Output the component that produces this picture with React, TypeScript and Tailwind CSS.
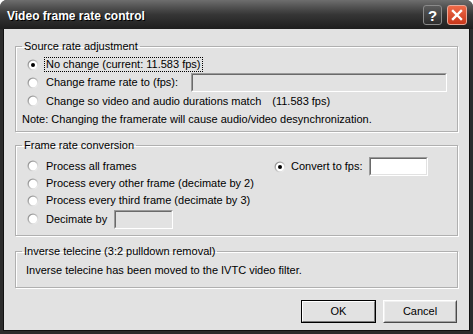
import React from 'react';

function Radio({ checked = false }: { checked?: boolean }) {
  return (
    <svg width="12" height="12" viewBox="0 0 12 12" className="shrink-0">
      <defs>
        <linearGradient id="rg" x1="0" y1="0" x2="1" y2="1">
          <stop offset="0" stopColor="#7a7a7a" />
          <stop offset="0.55" stopColor="#c8c8c8" />
          <stop offset="1" stopColor="#ffffff" />
        </linearGradient>
      </defs>
      <circle cx="6" cy="6" r="5.5" fill="url(#rg)" />
      <circle cx="6" cy="6" r="4.2" fill="#ffffff" />
      {checked && <circle cx="6" cy="6" r="2" fill="#000000" />}
    </svg>
  );
}

function Sunken({ className = '', white = false }: { className?: string; white?: boolean }) {
  return (
    <div
      className={`border border-t-[#9a9a9a] border-l-[#9a9a9a] border-b-white border-r-white ${
        white ? 'bg-white' : 'bg-[#e2e2e2]'
      } ${className}`}
    >
      <div className="h-full w-full border border-t-[#6a6a6a] border-l-[#6a6a6a] border-b-[#e2e2e2] border-r-[#e2e2e2]" />
    </div>
  );
}

function Group({ title, className = '', children }: { title: string; className?: string; children: React.ReactNode }) {
  return (
    <fieldset className={`mx-[11px] border border-[#b0b0b0] shadow-[inset_1px_1px_0_#ffffff,1px_1px_0_#ffffff] ${className}`}>
      <legend className="ml-[6px] px-[2px] leading-[13px]">{title}</legend>
      {children}
    </fieldset>
  );
}

export default function App() {
  return (
    <div className="w-[473px] h-[334px] flex flex-col bg-[#2c2c2c] rounded-t-[7px] font-['Liberation_Sans',Arial,sans-serif] text-[11px] text-black whitespace-nowrap">
      {/* title bar */}
      <div className="h-[29px] shrink-0 flex items-center pl-[7px] pr-[6px] rounded-t-[7px] bg-gradient-to-b from-[#6e6e6e] via-[#363636] to-[#1e1e1e]">
        <span className="text-white font-bold text-[12px] pt-[2px] [text-shadow:1px_1px_0_#000]">Video frame rate control</span>
        <div className="ml-auto flex items-center gap-[5px] pt-[1px]">
          <div className="w-[19px] h-[20px] rounded-[3px] border border-[#8a8a8a] bg-gradient-to-b from-[#5c5c5c] to-[#2e2e2e] flex items-center justify-center text-white font-bold text-[15px] leading-none">
            ?
          </div>
          <div className="w-[20px] h-[20px] rounded-[3px] border border-[#e8a898] bg-gradient-to-b from-[#ee6a48] to-[#c8361a] flex items-center justify-center">
            <svg width="12" height="12" viewBox="0 0 12 12">
              <path d="M2 2 L10 10 M10 2 L2 10" stroke="#ffffff" strokeWidth="2.4" strokeLinecap="square" />
            </svg>
          </div>
        </div>
      </div>

      {/* body */}
      <div className="flex-1 mx-[3px] mb-[3px] bg-[#e2e2e2] border-l border-r border-b border-[#111] flex flex-col pt-[11px]">
        <Group title="Source rate adjustment">
          <div className="flex flex-col pl-[11px] pr-[10px] pt-[3px] pb-[2px]">
            <div className="h-[17px] flex items-center gap-[5px]">
              <Radio checked />
              <span className="border border-dotted border-black px-[1px] leading-[13px]">No change (current: 11.583 fps)</span>
            </div>
            <div className="h-[19px] flex items-center gap-[5px]">
              <Radio />
              <span className="pl-[2px]">Change frame rate to (fps):</span>
              <Sunken className="ml-[8px] flex-1 h-[19px]" />
            </div>
            <div className="h-[18px] flex items-center gap-[5px]">
              <Radio />
              <span className="pl-[2px]">Change so video and audio durations match</span>
              <span className="ml-[6px]">(11.583 fps)</span>
            </div>
            <div className="h-[19px] flex items-center -ml-[5px]">
              Note: Changing the framerate will cause audio/video desynchronization.
            </div>
          </div>
        </Group>

        <Group title="Frame rate conversion" className="mt-[7px]">
          <div className="flex pl-[11px] pt-[5px] pb-[6px]">
            <div className="flex flex-col w-[247px]">
              <div className="h-[18px] flex items-center gap-[5px]">
                <Radio />
                <span className="pl-[2px]">Process all frames</span>
              </div>
              <div className="h-[17px] flex items-center gap-[5px]">
                <Radio />
                <span className="pl-[2px]">Process every other frame (decimate by 2)</span>
              </div>
              <div className="h-[17px] flex items-center gap-[5px]">
                <Radio />
                <span className="pl-[2px]">Process every third frame (decimate by 3)</span>
              </div>
              <div className="h-[20px] flex items-center gap-[5px]">
                <Radio />
                <span className="pl-[2px]">Decimate by</span>
                <Sunken className="ml-[2px] w-[59px] h-[19px]" />
              </div>
            </div>
            <div className="h-[19px] flex items-center gap-[5px]">
              <Radio checked />
              <span>Convert to fps:</span>
              <Sunken white className="ml-[1px] w-[59px] h-[19px]" />
            </div>
          </div>
        </Group>

        <Group title="Inverse telecine (3:2 pulldown removal)" className="mt-[9px]">
          <div className="pl-[10px] pt-[6px] pb-[10px] leading-[13px]">Inverse telecine has been moved to the IVTC video filter.</div>
        </Group>

        <div className="flex justify-end gap-[7px] mt-[12px] mr-[12px]">
          <button className="w-[75px] h-[23px] border border-black bg-[#e2e2e2] flex items-center justify-center">
            <div className="w-full h-full border border-t-white border-l-white border-b-[#7a7a7a] border-r-[#7a7a7a] flex items-center justify-center">
              OK
            </div>
          </button>
          <button className="w-[74px] h-[23px] border border-t-white border-l-white border-b-[#4a4a4a] border-r-[#4a4a4a] bg-[#e2e2e2] flex items-center justify-center">
            <div className="w-full h-full border border-t-[#f0f0f0] border-l-[#f0f0f0] border-b-[#a0a0a0] border-r-[#a0a0a0] flex items-center justify-center">
              Cancel
            </div>
          </button>
        </div>
      </div>
    </div>
  );
}
